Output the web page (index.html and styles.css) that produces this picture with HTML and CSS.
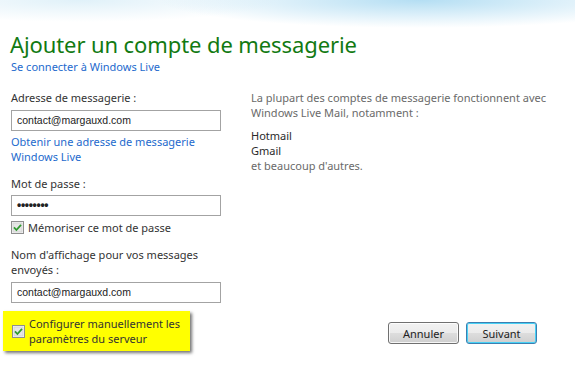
FILE: index.html
```html
<!DOCTYPE html>
<html lang="fr">
<head>
    <meta charset="UTF-8">
    <title>Ajouter un compte de messagerie</title>
    <link rel="stylesheet" href="styles.css">
</head>
<body>
    <div class="page">
        <h1>Ajouter un compte de messagerie</h1>
        <a class="link" href="#">Se connecter à Windows Live</a>

        <div class="columns">
            <form class="account-form">
                <label for="email">Adresse de messagerie :</label>
                <div class="textbox" id="email">contact@margauxd.com</div>
                <a class="link get-address" href="#">Obtenir une adresse de messagerie Windows Live</a>

                <label for="password" class="label-gap">Mot de passe :</label>
                <div class="textbox password" id="password">&bull;&bull;&bull;&bull;&bull;&bull;&bull;&bull;</div>
                <div class="check-row">
                    <svg class="check" width="13" height="13" viewBox="0 0 13 13">
                        <rect x="0.5" y="0.5" width="12" height="12" fill="#f4f4f4" stroke="#8f8f8f"/>
                        <rect x="2" y="2" width="9" height="9" fill="#e6e6e6" stroke="#c9c9c9" stroke-width="0.6"/>
                        <path d="M3 6.4 L5.4 9 L10 3.8" fill="none" stroke="#2f9a2f" stroke-width="1.8"/>
                    </svg>
                    <span>Mémoriser ce mot de passe</span>
                </div>

                <label for="name" class="label-gap">Nom d'affichage pour vos messages envoyés :</label>
                <div class="textbox" id="name">contact@margauxd.com</div>
            </form>

            <div class="info">
                <p class="info-intro">La plupart des comptes de messagerie fonctionnent avec Windows Live Mail, notamment :</p>
                <p class="info-list">
                    <span class="service">Hotmail</span>
                    <span class="service">Gmail</span>
                    <span>et beaucoup d'autres.</span>
                </p>
            </div>
        </div>

        <div class="footer">
            <div class="highlight">
                <svg class="check" width="13" height="13" viewBox="0 0 13 13">
                    <rect x="0.5" y="0.5" width="12" height="12" fill="#f4f4f4" stroke="#8f8f8f"/>
                    <rect x="2" y="2" width="9" height="9" fill="#e6e6e6" stroke="#c9c9c9" stroke-width="0.6"/>
                    <path d="M3 6.4 L5.4 9 L10 3.8" fill="none" stroke="#2f9a2f" stroke-width="1.8"/>
                </svg>
                <span>Configurer manuellement les paramètres du serveur</span>
            </div>
            <div class="button-container">
                <button type="button">Annuler</button>
                <button type="button" class="default">Suivant</button>
            </div>
        </div>
    </div>
</body>
</html>
```

FILE: styles.css
```css
body {
    margin: 0;
    padding: 0;
    font-family: "Noto Sans", "Open Sans", sans-serif;
    font-size: 11px;
    line-height: 15px;
    color: #333;
    background-color: #fff;
}
.page {
    height: 365px;
    box-sizing: border-box;
    padding: 30px 0 0 11px;
    background:
        radial-gradient(ellipse 260px 28px at 420px 0, #b4def3, rgba(255, 255, 255, 0)),
        radial-gradient(ellipse 200px 22px at 80px 0, #e0f1f9, rgba(255, 255, 255, 0)),
        #fff;
}
h1 {
    margin: 0 0 0 -1px;
    font-size: 22px;
    font-weight: normal;
    letter-spacing: -0.1px;
    line-height: 28px;
    color: #127a12;
}
.link {
    display: block;
    margin-top: 1px;
    color: #1d6acd;
    text-decoration: none;
}
.columns {
    display: flex;
    margin-top: 16px;
}
.account-form {
    display: flex;
    flex-direction: column;
    width: 210px;
}
label {
    display: block;
}
.label-gap {
    margin-top: 12px;
}
.textbox {
    height: 19px;
    margin-top: 5px;
    padding: 0 5px;
    border: 1px solid #a3a3a3;
    line-height: 19px;
    font-family: "Liberation Sans", Arial, sans-serif;
    font-size: 10.5px;
    color: #222;
}
.password {
    margin-top: 4px;
    font-size: 12px;
    font-weight: bold;
    letter-spacing: -0.3px;
}
.get-address {
    margin-top: 3px;
}
.check-row {
    display: flex;
    align-items: center;
    gap: 4px;
    margin-top: 4px;
}
.check {
    flex: none;
}
.info {
    margin-left: 30px;
    width: 310px;
    color: #6a6a6a;
}
.info p {
    margin: 0;
}
.info-list {
    display: flex;
    flex-direction: column;
    margin-top: 8px !important;
}
.service {
    color: #2a2a2a;
}
.footer {
    display: flex;
    align-items: center;
    justify-content: space-between;
    margin: 8px 38px 0 -8px;
}
.highlight {
    display: flex;
    align-items: center;
    gap: 4px;
    width: 187px;
    height: 40px;
    box-sizing: border-box;
    padding: 0 4px 0 9px;
    background-color: #ffff00;
    box-shadow: 2px 2px 3px rgba(0, 0, 0, 0.55);
    color: #333;
}
.button-container {
    display: flex;
    gap: 7px;
    margin-top: 4px;
}
button {
    width: 71px;
    height: 22px;
    padding: 0;
    font-family: "Noto Sans", "Open Sans", sans-serif;
    font-size: 11px;
    color: #222;
    border: 1px solid #707070;
    border-radius: 3px;
    background: linear-gradient(#f2f2f2 0%, #ebebeb 50%, #dddddd 51%, #cfcfcf 100%);
    box-shadow: inset 0 0 0 1px rgba(255, 255, 255, 0.8);
}
button.default {
    border-color: #3c7fb1;
    box-shadow: inset 0 0 0 1px #48d1f5;
}
```
